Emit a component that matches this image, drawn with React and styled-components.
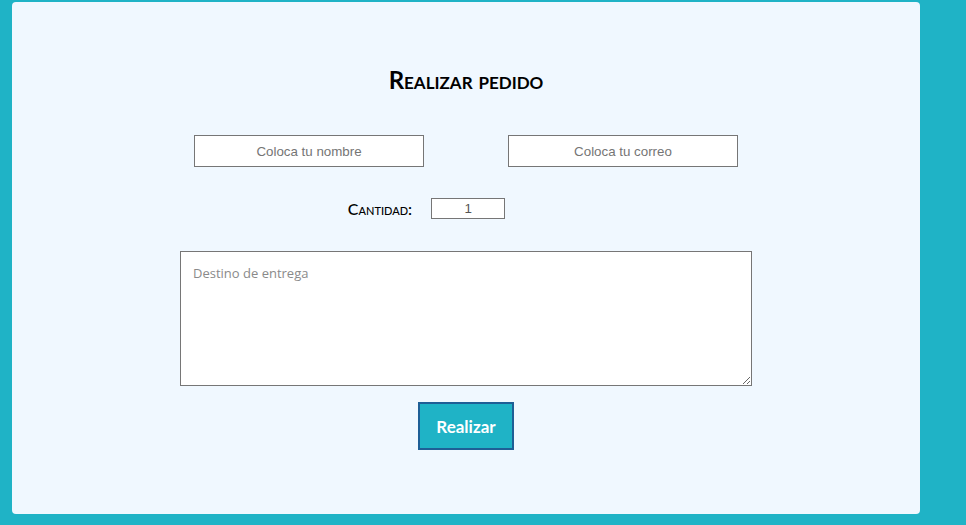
import React from "react"
import styled, { createGlobalStyle } from "styled-components"

const GlobalStyle = createGlobalStyle`
  html, body {
    margin: 0;
    padding: 0;
    background: #1fb3c6;
  }
`

const Page = styled.div`
  padding: 2px 0 0 12px;
  min-height: 525px;
  box-sizing: border-box;
`

const Card = styled.form`
  width: 908px;
  height: 512px;
  background: #f0f8ff;
  border-radius: 4px;
  display: flex;
  flex-direction: column;
  align-items: center;
  box-sizing: border-box;
  padding-top: 64px;
`

const Title = styled.h2`
  margin: 0;
  font-family: Lato, "Liberation Sans", sans-serif;
  font-variant: small-caps;
  font-weight: 700;
  font-size: 24px;
  line-height: 28px;
  color: #000;
`

const Row = styled.div`
  display: flex;
  align-items: center;
  justify-content: center;
  gap: ${({ gap }) => gap || 0}px;
  margin-top: ${({ top }) => top || 0}px;
  padding-right: ${({ shift }) => shift || 0}px;
`

const TextInput = styled.input`
  width: ${({ w }) => w}px;
  height: ${({ h }) => h}px;
  box-sizing: border-box;
  border: 1px solid #767676;
  background: #fff;
  text-align: center;
  font-family: "Liberation Sans", Arial, sans-serif;
  font-size: 13.33px;
  color: #555;
  outline: none;
  padding: 0;
  &::placeholder {
    color: #757575;
  }
`

const Label = styled.label`
  font-family: Lato, "Liberation Sans", sans-serif;
  font-variant: small-caps;
  font-size: 16px;
  font-weight: 500;
  color: #000;
`

const Area = styled.textarea`
  margin-top: 32px;
  width: 572px;
  height: 135px;
  box-sizing: border-box;
  border: 1px solid #767676;
  background: #fff;
  padding: 12px;
  font-family: "Open Sans", Lato, sans-serif;
  font-size: 13px;
  color: #333;
  outline: none;
  &::placeholder {
    color: #8a8a8a;
  }
`

const Button = styled.button`
  margin-top: 16px;
  width: 96px;
  height: 48px;
  background: #1fb3c6;
  border: 2px solid #1e5f96;
  color: #fff;
  font-family: Lato, "Liberation Sans", sans-serif;
  font-weight: 700;
  font-size: 17px;
  cursor: pointer;
`

const App = () => {
  return (
    <Page>
      <GlobalStyle />
      <Card onSubmit={(e) => e.preventDefault()}>
        <Title>Realizar pedido</Title>
        <Row gap={84} top={41}>
          <TextInput w={230} h={32} placeholder="Coloca tu nombre" />
          <TextInput w={230} h={32} placeholder="Coloca tu correo" />
        </Row>
        <Row gap={19} top={31} shift={79}>
          <Label>Cantidad:</Label>
          <TextInput w={74} h={21} type="text" defaultValue="1" />
        </Row>
        <Area placeholder="Destino de entrega" />
        <Button type="submit">Realizar</Button>
      </Card>
    </Page>
  )
}

export default App
